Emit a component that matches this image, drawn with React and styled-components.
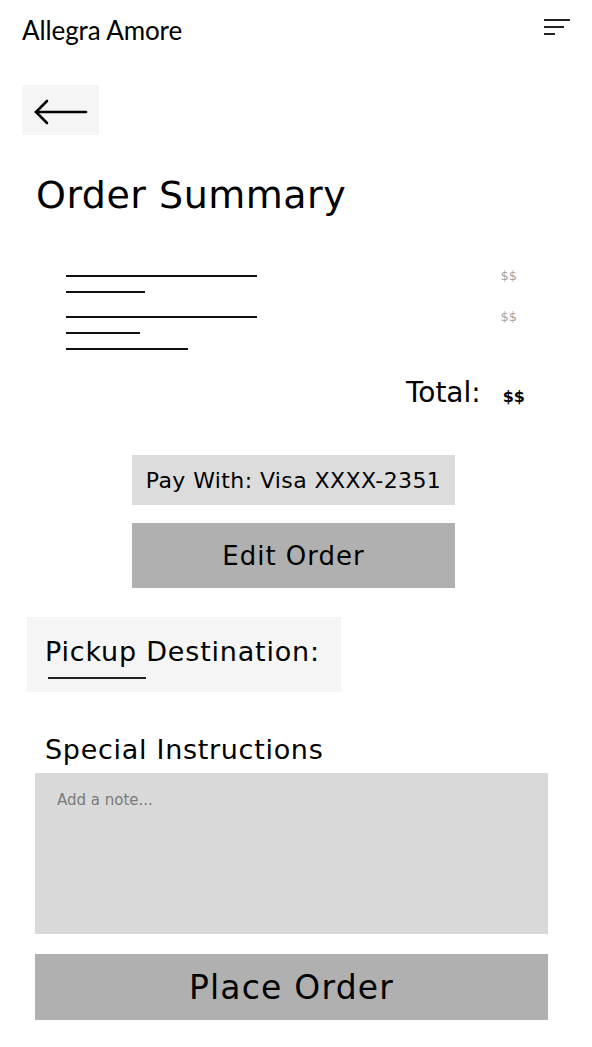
import React from 'react';
import styled, { createGlobalStyle } from 'styled-components';

const Global = createGlobalStyle`
  body {
    margin: 0;
    background: #fff;
    font-family: 'DejaVu Sans', 'Noto Sans', sans-serif;
    color: #000;
  }
`;

const Page = styled.div`
  width: 592px;
  box-sizing: border-box;
  display: flex;
  flex-direction: column;
`;

const Header = styled.header`
  display: flex;
  justify-content: space-between;
  align-items: center;
  padding: 14px 22px 0 22px;
  height: 32px;
`;

const Brand = styled.div`
  font-family: 'Lato', sans-serif;
  font-size: 26px;
  letter-spacing: -0.1px;
`;

const Menu = styled.button`
  background: none;
  border: 0;
  padding: 0;
  margin-top: -6px;
  width: 26px;
  display: flex;
  flex-direction: column;
  gap: 5px;
  span {
    display: block;
    height: 2px;
    background: #222;
  }
`;

const BackButton = styled.button`
  margin: 39px 0 0 22px;
  width: 77px;
  height: 50px;
  border: 0;
  background: #f5f5f5;
  display: flex;
  align-items: center;
  justify-content: center;
  padding: 3px 0 0;
`;

const Title = styled.h1`
  margin: 37px 0 0 36px;
  font-size: 38px;
  font-weight: 400;
  letter-spacing: 0.5px;
  line-height: 46px;
`;

const Items = styled.div`
  margin: 57px 75px 0 66px;
  display: flex;
  flex-direction: column;
  gap: 23px;
`;

const Item = styled.div`
  display: flex;
  justify-content: space-between;
  align-items: flex-start;
`;

const Lines = styled.div`
  display: flex;
  flex-direction: column;
  gap: 14px;
`;

const Line = styled.div`
  height: 2px;
  width: ${p => p.$w}px;
  background: #111;
`;

const Price = styled.span`
  color: #a3a3a3;
  font-size: 13px;
  margin-top: -7px;
`;

const TotalRow = styled.div`
  margin: 26px 67px 0 0;
  display: flex;
  justify-content: flex-end;
  align-items: baseline;
  gap: 22px;
`;

const TotalLabel = styled.span`
  font-size: 28px;
`;

const TotalValue = styled.span`
  font-size: 16px;
  font-weight: 700;
`;

const Center = styled.div`
  display: flex;
  flex-direction: column;
  align-items: flex-start;
  gap: 18px;
  margin-top: 46px;
  padding-left: 132px;
`;

const PayWith = styled.div`
  width: 323px;
  height: 50px;
  background: #dcdcdc;
  display: flex;
  align-items: center;
  justify-content: center;
  font-size: 22px;
  letter-spacing: 0.4px;
`;

const Button = styled.button`
  border: 0;
  background: #b0b0b0;
  color: #000;
  font-family: 'DejaVu Sans', sans-serif;
  width: ${p => p.$w}px;
  height: ${p => p.$h}px;
  font-size: ${p => p.$fs}px;
  letter-spacing: ${p => p.$ls}px;
  padding: 0;
`;

const Pickup = styled.div`
  margin: 29px 0 0 27px;
  width: 314px;
  height: 75px;
  box-sizing: border-box;
  background: #f5f5f5;
  padding: 19px 0 0 18px;
  font-size: 27px;
  letter-spacing: 0.8px;
  line-height: 32px;
`;

const Underline = styled.div`
  margin: 9px 0 0 3px;
  width: 98px;
  height: 2px;
  background: #222;
`;

const Label = styled.div`
  margin: 40px 0 0 45px;
  font-size: 27px;
  letter-spacing: 0.7px;
  line-height: 36px;
`;

const Note = styled.textarea`
  display: block;
  margin: 5px 0 0 35px;
  width: 513px;
  height: 161px;
  box-sizing: border-box;
  background: #d9d9d9;
  border: 0;
  resize: none;
  padding: 18px 22px;
  font-family: 'DejaVu Sans', sans-serif;
  font-size: 15px;
  &::placeholder {
    color: #7a7a7a;
  }
`;

const Bottom = styled.div`
  margin: 20px 0 0 35px;
`;

export default function App() {
  return (
    <Page>
      <Global />
      <Header>
        <Brand>Allegra Amore</Brand>
        <Menu aria-label="menu">
          <span style={{ width: 26 }} />
          <span style={{ width: 20 }} />
          <span style={{ width: 11 }} />
        </Menu>
      </Header>
      <BackButton aria-label="back">
        <svg width="54" height="28" viewBox="0 0 54 28" fill="none" stroke="#000" strokeWidth="2.6" strokeLinecap="round">
          <path d="M2 14 H52" />
          <path d="M13 3 L2 14 L13 25" />
        </svg>
      </BackButton>
      <Title>Order Summary</Title>
      <Items>
        <Item>
          <Lines>
            <Line $w={191} />
            <Line $w={79} />
          </Lines>
          <Price>$$</Price>
        </Item>
        <Item>
          <Lines>
            <Line $w={191} />
            <Line $w={74} />
            <Line $w={122} />
          </Lines>
          <Price>$$</Price>
        </Item>
      </Items>
      <TotalRow>
        <TotalLabel>Total:</TotalLabel>
        <TotalValue>$$</TotalValue>
      </TotalRow>
      <Center>
        <PayWith>Pay With: Visa XXXX-2351</PayWith>
        <Button $w={323} $h={65} $fs={26} $ls={1}>Edit Order</Button>
      </Center>
      <Pickup>
        Pickup Destination:
        <Underline />
      </Pickup>
      <Label>Special Instructions</Label>
      <Note placeholder="Add a note..." />
      <Bottom>
        <Button $w={513} $h={66} $fs={33} $ls={1.2}>Place Order</Button>
      </Bottom>
    </Page>
  );
}
